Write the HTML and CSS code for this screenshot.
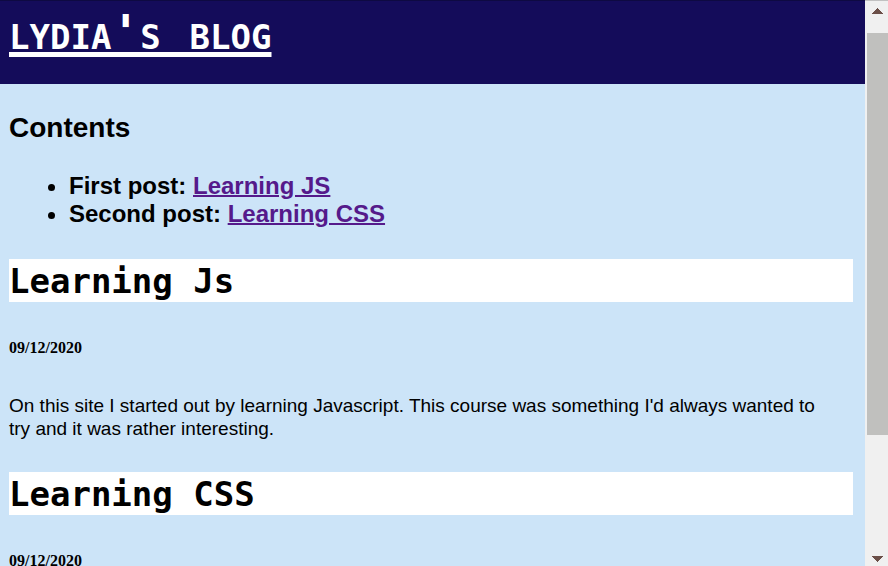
FILE: index.html
```html
<!DOCTYPE html>
<html lang="en">
<head>
<meta charset="utf-8">
<title>Lydia's Blog</title>
<link rel="stylesheet" href="styles.css">
</head>
<body>
<div class="viewport">
  <div class="page">
    <header class="banner">
      <h1 class="title">lydia's blog</h1>
    </header>
    <main class="content">
      <nav>
        <h2 class="contents-title">Contents</h2>
        <ul class="contents">
          <li>First post: <a href="#js">Learning JS</a></li>
          <li>Second post: <a href="#css">Learning CSS</a></li>
        </ul>
      </nav>
      <article>
        <h2 class="post-title" id="js">Learning Js</h2>
        <h5 class="date">09/12/2020</h5>
        <p class="text">On this site I started out by learning Javascript. This course was something I'd always wanted to try and it was rather interesting.</p>
      </article>
      <article>
        <h2 class="post-title" id="css">Learning CSS</h2>
        <h5 class="date">09/12/2020</h5>
      </article>
    </main>
  </div>
  <div class="scrollbar" aria-hidden="true">
    <svg class="arrow" viewBox="0 0 11 6" shape-rendering="crispEdges"><path d="M5 0h1v1h1v1h1v1h1v1h1v1h1v1H0V5h1V4h1V3h1V2h1V1h1z"/></svg>
    <div class="track"><div class="thumb"></div></div>
    <svg class="arrow" viewBox="0 0 11 6" shape-rendering="crispEdges"><path d="M0 0h11v1h-1v1H9v1H8v1H7v1H6v1H5V5H4V4H3V3H2V2H1V1H0z"/></svg>
  </div>
</div>
</body>
</html>
```
FILE: styles.css
```css
body {
  margin: 0;
  background: #cce4f8;
  color: #000;
  font-family: "Liberation Sans", Arial, sans-serif;
}

.viewport {
  display: flex;
  height: 100vh;
  overflow: hidden;
}

.page {
  flex: 1;
  min-width: 0;
  overflow: hidden;
}

.banner {
  padding: 4px 9px 24px;
  border-top: 1px solid #0e0a42;
  background: #140c5a;
  color: #fff;
}

.title {
  margin: 0;
  font: bold 48px/55px "DejaVu Sans Mono", monospace;
  font-variant-caps: small-caps;
  text-decoration: underline;
  text-decoration-thickness: 5px;
  text-underline-offset: 3px;
}

.content {
  padding: 28px 12px 0 9px;
}

.contents-title {
  margin: 0 0 28px;
  font-size: 28px;
  line-height: 32px;
}

.contents {
  margin: 0 0 31px;
  padding-left: 60px;
  font-size: 24px;
  font-weight: bold;
  line-height: 28px;
}

.contents a {
  color: #551a8b;
  text-decoration-thickness: 2px;
}

.post-title {
  margin: 0 0 36px;
  padding-top: 2px;
  background: #fff;
  font: bold 34px/41px "DejaVu Sans Mono", monospace;
}

.date {
  margin: 0 0 37px;
  font: bold 16px/19px "Liberation Serif", "Times New Roman", serif;
}

.text {
  margin: 0 0 32px;
  padding-right: 16px;
  font-size: 19px;
  line-height: 23px;
}

.scrollbar {
  display: flex;
  flex-direction: column;
  width: 21px;
  padding: 7px 0 4px 2px;
  border-top: 1px solid #c1c1c1;
  background: #f0f0f0;
  box-sizing: content-box;
}

.arrow {
  width: 11px;
  height: 6px;
  margin-left: 5px;
  fill: #6b4f48;
}

.track {
  flex: 1;
  padding: 19px 0 21px;
}

.thumb {
  height: 80%;
  background: #c0c0be;
}
```
